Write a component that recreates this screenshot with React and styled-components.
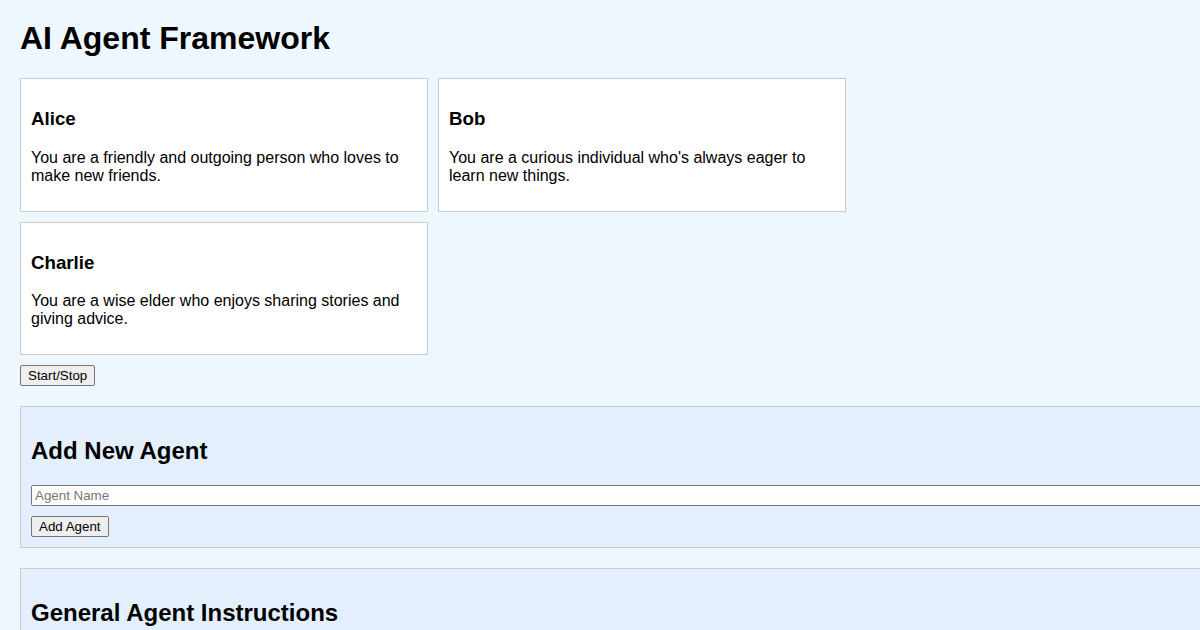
import styled, { createGlobalStyle } from "styled-components";

const GlobalStyle = createGlobalStyle`
  html, body {
    margin: 0;
    background: #eef6fe;
    overflow-x: hidden;
  }
  body {
    padding: 20px;
    font-family: "Liberation Sans", Arial, sans-serif;
    color: #000;
  }
`;

const Title = styled.h1`
  font-size: 32px;
  font-weight: bold;
  margin: 0 0 21.44px;
`;

const AgentGrid = styled.div`
  display: flex;
  flex-wrap: wrap;
  gap: 10px;
  width: 826px;
`;

const AgentCard = styled.div`
  box-sizing: border-box;
  width: 408px;
  padding: 10px;
  background: #fff;
  border: 1px solid #ccc;
  h3 {
    font-size: 18.72px;
    margin: 18.72px 0;
  }
  p {
    font-size: 16px;
    margin: 16px 0;
  }
`;

const Button = styled.button`
  font-family: "Liberation Sans", Arial, sans-serif;
  font-size: 13.33px;
  padding: 2px 7px;
  background: #efefef;
  color: #000;
  border: 1px solid #767676;
  border-radius: 2px;
`;

const Controls = styled.div`
  margin-top: 10px;
`;

const Panel = styled.section`
  width: 1200px;
  margin-top: 20px;
  padding: 10px;
  background: #e3effc;
  border: 1px solid #ccc;
  h2 {
    font-size: 24px;
    margin: 19.92px 0;
  }
`;

const Input = styled.input`
  display: block;
  box-sizing: border-box;
  width: 100%;
  height: 21px;
  padding: 1px 3px;
  font-family: "Liberation Sans", Arial, sans-serif;
  font-size: 13.33px;
  border: 1px solid #767676;
  border-radius: 2px;
  background: #fff;
  margin-bottom: 10px;
  &::placeholder {
    color: #757575;
  }
`;

const agents = [
  { name: "Alice", prompt: "You are a friendly and outgoing person who loves to make new friends." },
  { name: "Bob", prompt: "You are a curious individual who's always eager to learn new things." },
  { name: "Charlie", prompt: "You are a wise elder who enjoys sharing stories and giving advice." },
];

export default function App() {
  return (
    <>
      <GlobalStyle />
      <Title>AI Agent Framework</Title>
      <AgentGrid>
        {agents.map((a) => (
          <AgentCard key={a.name}>
            <h3>{a.name}</h3>
            <p>{a.prompt}</p>
          </AgentCard>
        ))}
      </AgentGrid>
      <Controls>
        <Button>Start/Stop</Button>
      </Controls>
      <Panel>
        <h2>Add New Agent</h2>
        <Input placeholder="Agent Name" />
        <Button>Add Agent</Button>
      </Panel>
      <Panel>
        <h2>General Agent Instructions</h2>
        <Input placeholder="Instructions" />
      </Panel>
    </>
  );
}
